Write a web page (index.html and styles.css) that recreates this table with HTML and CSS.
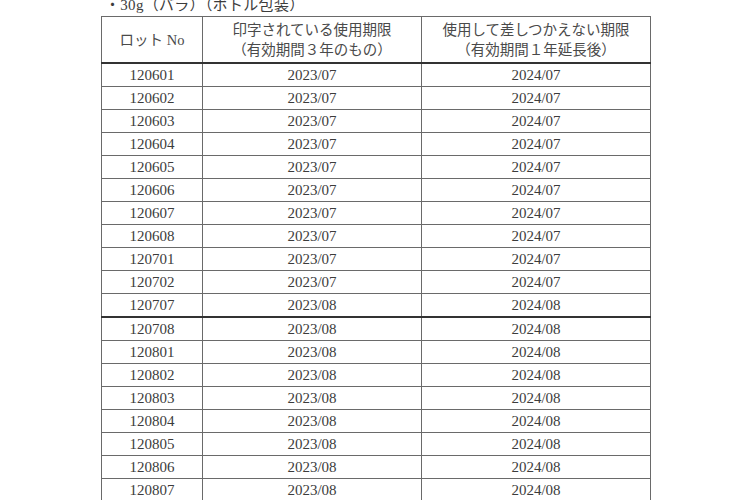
FILE: index.html
```html
<!DOCTYPE html>
<html lang="ja">
<head>
<meta charset="utf-8">
<link rel="stylesheet" href="styles.css">
</head>
<body>
<div class="page">
  <div class="title">・30g（バラ）（ボトル包装）</div>
  <table class="lots">
    <colgroup>
      <col class="c1"><col class="c2"><col class="c3">
    </colgroup>
    <thead>
      <tr>
        <th>ロット No</th>
        <th>印字されている使用期限<br>（有効期間３年のもの）</th>
        <th>使用して差しつかえない期限<br>（有効期間１年延長後）</th>
      </tr>
    </thead>
    <tbody>
      <tr><td>120601</td><td>2023/07</td><td>2024/07</td></tr>
      <tr><td>120602</td><td>2023/07</td><td>2024/07</td></tr>
      <tr><td>120603</td><td>2023/07</td><td>2024/07</td></tr>
      <tr><td>120604</td><td>2023/07</td><td>2024/07</td></tr>
      <tr><td>120605</td><td>2023/07</td><td>2024/07</td></tr>
      <tr><td>120606</td><td>2023/07</td><td>2024/07</td></tr>
      <tr><td>120607</td><td>2023/07</td><td>2024/07</td></tr>
      <tr><td>120608</td><td>2023/07</td><td>2024/07</td></tr>
      <tr><td>120701</td><td>2023/07</td><td>2024/07</td></tr>
      <tr><td>120702</td><td>2023/07</td><td>2024/07</td></tr>
      <tr><td>120707</td><td>2023/08</td><td>2024/08</td></tr>
      <tr class="break"><td>120708</td><td>2023/08</td><td>2024/08</td></tr>
      <tr><td>120801</td><td>2023/08</td><td>2024/08</td></tr>
      <tr><td>120802</td><td>2023/08</td><td>2024/08</td></tr>
      <tr><td>120803</td><td>2023/08</td><td>2024/08</td></tr>
      <tr><td>120804</td><td>2023/08</td><td>2024/08</td></tr>
      <tr><td>120805</td><td>2023/08</td><td>2024/08</td></tr>
      <tr><td>120806</td><td>2023/08</td><td>2024/08</td></tr>
      <tr><td>120807</td><td>2023/08</td><td>2024/08</td></tr>
    </tbody>
  </table>
</div>
</body>
</html>
```
FILE: styles.css
```css
html, body {
  margin: 0;
  padding: 0;
  background: #ffffff;
}
body {
  width: 750px;
  height: 500px;
  overflow: hidden;
  font-family: "Liberation Serif", "Noto Sans CJK JP", serif;
  color: #3c3c3c;
}
.page {
  padding-left: 101px;
}
.title {
  margin-top: -5px;
  height: 20px;
  line-height: 20px;
  font-size: 15px;
  padding-left: 4px;
  letter-spacing: 0.3px;
}
.lots {
  border-collapse: collapse;
  table-layout: fixed;
  width: 549px;
  margin-top: 1px;
  font-size: 15px;
}
.c1 { width: 101px; }
.c2 { width: 219px; }
.c3 { width: 229px; }
.lots th, .lots td {
  border: 1px solid #6a6a6a;
  text-align: center;
  padding: 0;
  font-weight: normal;
}
.lots th {
  height: 45px;
  line-height: 20px;
  font-size: 14.5px;
  border-bottom: 2px solid #333333;
  color: #4a4a4a;
}
.lots td {
  height: 22px;
  line-height: 22px;
}
.lots tr.break td {
  border-top: 2px solid #333333;
}
```
